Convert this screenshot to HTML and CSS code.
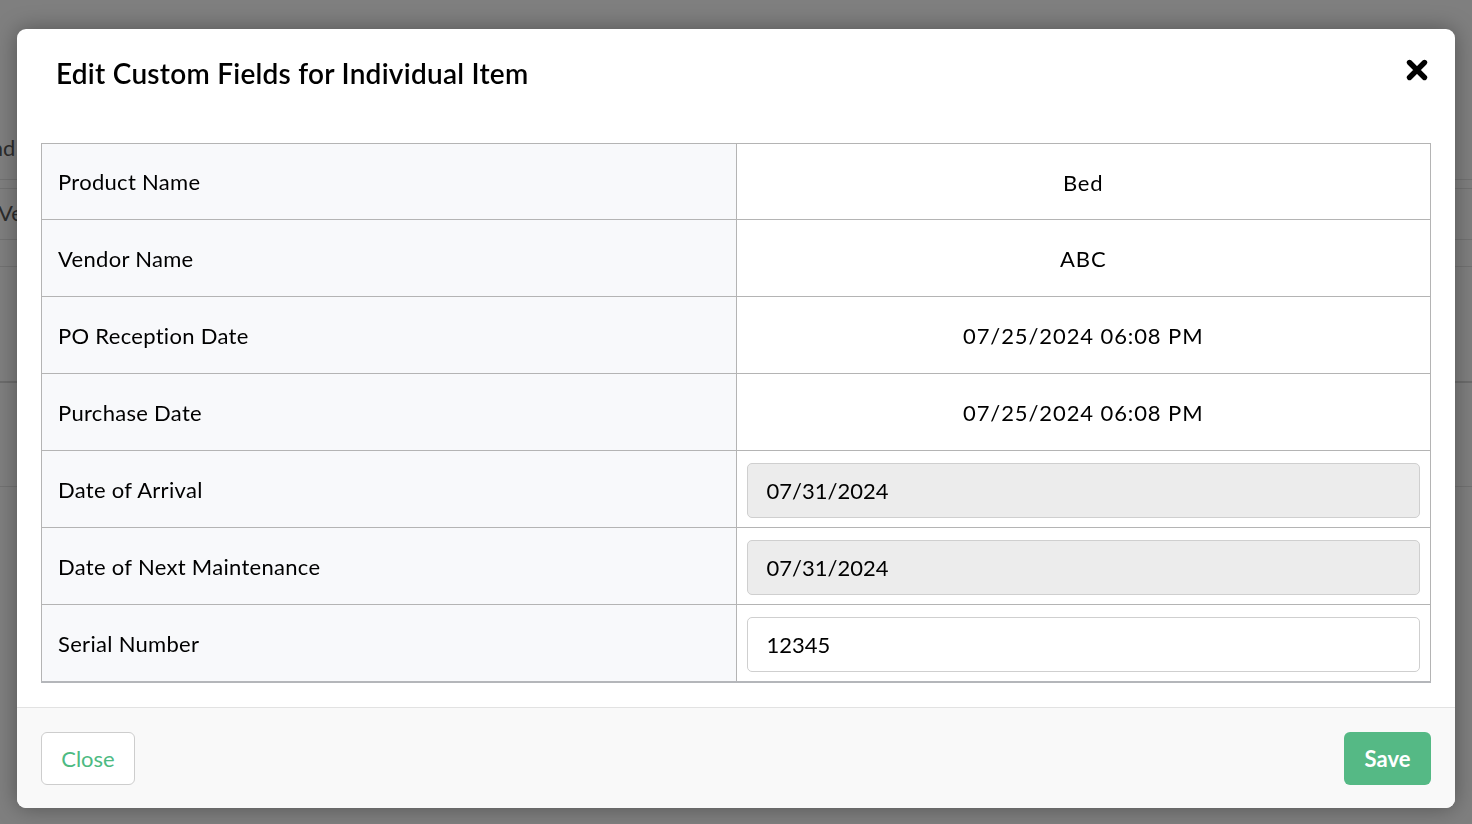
FILE: index.html
```html
<!DOCTYPE html>
<html lang="en">
<head>
    <meta charset="UTF-8">
    <meta name="viewport" content="width=device-width, initial-scale=1.0">
    <title>Edit Custom Fields</title>
    <link rel="stylesheet" href="styles.css">
</head>
<body>
    <!-- page behind the modal -->
    <div class="page">
        <div class="page-row row-a"><span class="end-word">Brand</span></div>
        <div class="page-row row-b"></div>
        <div class="page-row row-c">Vendor</div>
        <div class="page-row row-d"></div>
        <div class="page-row row-e"></div>
        <div class="page-row row-f"></div>
    </div>

    <div class="backdrop">
        <div class="modal">
            <div class="modal-header">
                <h2>Edit Custom Fields for Individual Item</h2>
                <button class="close-x" aria-label="Close">
                    <svg viewBox="0 0 24 24" width="24" height="24">
                        <path d="M4.5 4.5 L19.5 19.5 M19.5 4.5 L4.5 19.5" stroke="#000" stroke-width="5.4" stroke-linecap="round"/>
                    </svg>
                </button>
            </div>
            <div class="modal-body">
                <table class="fields">
                    <tr>
                        <td class="label">Product Name</td>
                        <td class="value">Bed</td>
                    </tr>
                    <tr>
                        <td class="label">Vendor Name</td>
                        <td class="value">ABC</td>
                    </tr>
                    <tr>
                        <td class="label">PO Reception Date</td>
                        <td class="value">07/25/2024 06:08 PM</td>
                    </tr>
                    <tr>
                        <td class="label">Purchase Date</td>
                        <td class="value">07/25/2024 06:08 PM</td>
                    </tr>
                    <tr>
                        <td class="label">Date of Arrival</td>
                        <td class="field"><input type="text" value="07/31/2024" disabled></td>
                    </tr>
                    <tr>
                        <td class="label">Date of Next Maintenance</td>
                        <td class="field"><input type="text" value="07/31/2024" disabled></td>
                    </tr>
                    <tr>
                        <td class="label">Serial Number</td>
                        <td class="field"><input type="text" value="12345"></td>
                    </tr>
                </table>
            </div>
            <div class="modal-footer">
                <button class="btn btn-close">Close</button>
                <button class="btn btn-save">Save</button>
            </div>
        </div>
    </div>
</body>
</html>
```

FILE: styles.css
```css
body {
    margin: 0;
    height: 100vh;
    overflow: hidden;
    background: #7f7f7f;
    font-family: Lato, "Liberation Sans", sans-serif;
    color: #000;
}

/* page behind the overlay */
.page {
    padding-top: 120px;
    display: flex;
    flex-direction: column;
}
.page-row {
    border-bottom: 1px solid #727272;
    font-size: 22px;
    color: #2c2c2c;
    box-sizing: border-box;
}
.end-word {
    display: inline-block;
    margin-left: -42px;
}
.row-a { height: 60px; line-height: 56px; }
.row-b { height: 9px; }
.row-c { height: 51px; line-height: 48px; margin-left: -2px; }
.row-d { height: 27px; }
.row-e { height: 116px; border-bottom: 2px solid #6c6c6c; }
.row-f { height: 104px; }

.backdrop {
    position: fixed;
    inset: 0;
    display: flex;
    justify-content: center;
    padding-top: 29px;
}

.modal {
    width: 1438px;
    height: 779px;
    background: #fff;
    border-radius: 9px;
    box-shadow: 0 0 22px rgba(0, 0, 0, 0.35);
    display: flex;
    flex-direction: column;
    overflow: hidden;
}

.modal-header {
    height: 88px;
    display: flex;
    align-items: center;
    justify-content: space-between;
    padding: 0 26px 0 39px;
}
.modal-header h2 {
    margin: 0;
    font-size: 28px;
    font-weight: 600;
    letter-spacing: 0.25px;
}
.close-x {
    background: none;
    border: none;
    padding: 0;
    width: 24px;
    height: 24px;
    margin-top: -6px;
    cursor: pointer;
}
.close-x svg {
    display: block;
}

.modal-body {
    padding: 26px 24px 0;
}

.fields {
    width: 100%;
    border-collapse: collapse;
    border: 1px solid #b4b4b4;
    border-bottom: 2px solid #b4b6ba;
    table-layout: fixed;
}
.fields td {
    height: 77px;
    border: 1px solid #b4b4b4;
    font-size: 22px;
    vertical-align: middle;
    box-sizing: border-box;
}
.fields tr:first-child td {
    height: 76px;
}
.fields .label {
    background: #f8f9fb;
    padding: 0 16px;
    letter-spacing: 0.3px;
}
.fields .value {
    text-align: center;
    padding-top: 2px;
    letter-spacing: 0.9px;
}
.fields .field {
    padding: 12px 10px 9px;
}
.fields input {
    width: 100%;
    height: 55px;
    box-sizing: border-box;
    border: 1px solid #cfcfcf;
    border-radius: 5px;
    padding: 0 19px;
    font-family: inherit;
    font-size: 22px;
    color: #000;
    background: #fff;
}
.fields input:disabled {
    background: #ececec;
    color: #000;
}

.modal-footer {
    margin-top: auto;
    height: 101px;
    box-sizing: border-box;
    border-top: 1px solid #e2e2e2;
    background: #f9f9f9;
    display: flex;
    align-items: center;
    justify-content: space-between;
    padding: 0 24px;
}
.btn {
    height: 53px;
    font-family: inherit;
    font-size: 22px;
    border-radius: 6px;
    cursor: pointer;
}
.btn-close {
    width: 94px;
    background: #fff;
    border: 1px solid #cdcdcd;
    color: #4dba82;
}
.btn-save {
    width: 87px;
    background: #55b985;
    border: none;
    color: #fff;
    font-weight: 700;
}
```
